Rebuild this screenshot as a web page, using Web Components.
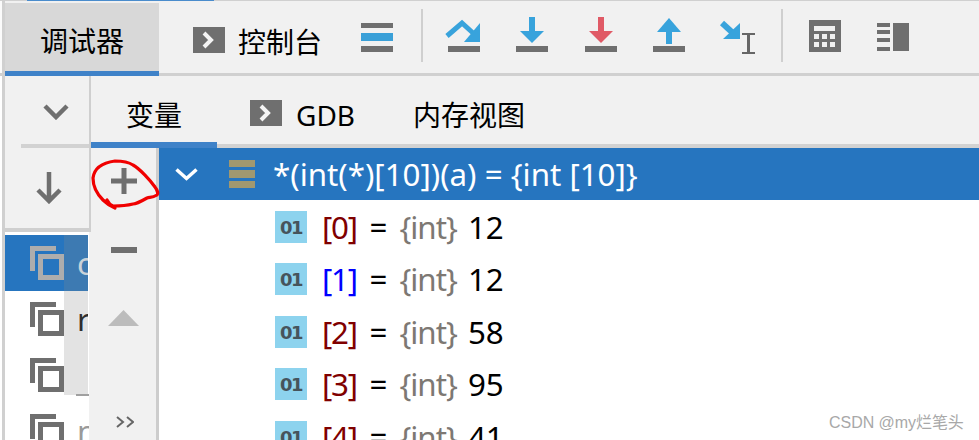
<!DOCTYPE html>
<html lang="zh"><head><meta charset="utf-8"><title>调试器</title>
<style>
html,body{margin:0;padding:0;background:#fff;height:440px;overflow:hidden}
body{font-family:"Noto Sans","Noto Sans CJK SC",sans-serif;font-size:27px;color:#000}
</style></head><body>
<dbg-app>
  <dbg-toolbar slot="toolbar">
    <tool-tab active style="width:154px;margin-right:34px">调试器</tool-tab>
    <tool-tab console style="margin-right:39px">控制台</tool-tab>
    <tool-icon name="menu" style="margin-right:28px"></tool-icon>
    <tool-sep style="margin-right:25px"></tool-sep>
    <tool-icon name="over" style="margin-right:36px"></tool-icon>
    <tool-icon name="into" style="margin-right:37px"></tool-icon>
    <tool-icon name="force" style="margin-right:36px"></tool-icon>
    <tool-icon name="out" style="margin-right:35px"></tool-icon>
    <tool-icon name="cursor" w="36" style="margin-right:25px"></tool-icon>
    <tool-sep style="margin-right:26px"></tool-sep>
    <tool-icon name="calc" style="margin-right:36px"></tool-icon>
    <tool-icon name="layout"></tool-icon>
  </dbg-toolbar>
  <frame-pane slot="frames">
    <frame-row selected>c</frame-row>
    <frame-row>r</frame-row>
    <frame-row></frame-row>
    <frame-row dim>n</frame-row>
  </frame-pane>
  <var-pane slot="vars">
    <sub-tab slot="tabs" active style="width:126px;margin-right:33px">变量</sub-tab>
    <sub-tab slot="tabs" console style="margin-right:58px">GDB</sub-tab>
    <sub-tab slot="tabs">内存视图</sub-tab>
    <root-row slot="rows">*(int(*)[10])(a) = {int [10]}</root-row>
    <var-row slot="rows" style="--idx:#800000"><span slot="idx">[0]</span>12</var-row>
    <var-row slot="rows" style="--idx:#0000ff"><span slot="idx">[1]</span>12</var-row>
    <var-row slot="rows" style="--idx:#800000"><span slot="idx">[2]</span>58</var-row>
    <var-row slot="rows" style="--idx:#800000"><span slot="idx">[3]</span>95</var-row>
    <var-row slot="rows" style="--idx:#800000"><span slot="idx">[4]</span>41</var-row>
  </var-pane>
</dbg-app>
<script>
const ICONS={
 menu:`<rect x="0" y="23" width="32" height="5" fill="#6f6f6f"/><rect x="0" y="33" width="32" height="8" fill="#3aa0d8"/><rect x="0" y="46" width="32" height="6" fill="#6f6f6f"/>`,
 over:`<path d="M-1 36L14 23L25 33" fill="none" stroke="#38a3dc" stroke-width="5"/><path d="M32 23V42H16Z" fill="#38a3dc"/><rect x="0" y="46" width="32" height="6" fill="#6f6f6f"/>`,
 into:`<rect x="13" y="17" width="6" height="15" fill="#38a3dc"/><path d="M4 31H28L16 43Z" fill="#38a3dc"/><rect y="46" width="32" height="6" fill="#6f6f6f"/>`,
 force:`<rect x="13" y="17" width="6" height="15" fill="#e05a66"/><path d="M4 31H28L16 43Z" fill="#e05a66"/><rect y="46" width="32" height="6" fill="#6f6f6f"/>`,
 out:`<path d="M4 32L16 18L28 32Z" fill="#38a3dc"/><rect x="13" y="31" width="6" height="13" fill="#38a3dc"/><rect y="46" width="32" height="6" fill="#6f6f6f"/>`,
 cursor:`<path d="M2 23L14 34" stroke="#38a3dc" stroke-width="6" fill="none"/><path d="M20 23V39H3Z" fill="#38a3dc"/><path d="M22 34h4M31 34h4M22 53h4M31 53h4" stroke="#666" stroke-width="2" fill="none"/><rect x="26" y="33" width="5" height="2" fill="#666"/><rect x="27" y="35" width="3" height="17" fill="#666"/><rect x="26" y="52" width="5" height="2" fill="#666"/>`,
 calc:`<rect y="20" width="32" height="32" fill="#6f6f6f"/><rect x="5" y="26" width="21" height="5" fill="#f0f0f0"/><path d="M5 34h5v5H5zM13 34h5v5h-5zM21 34h5v5h-5zM5 42h5v5H5zM13 42h5v5h-5zM21 42h5v5h-5z" fill="#f0f0f0"/>`,
 layout:`<rect x="16" y="23" width="16" height="28" fill="#6f6f6f"/><path d="M0 23h13v4H0zM0 30h13v4H0zM0 38h13v4H0zM0 47h13v4H0z" fill="#6f6f6f"/>`
};
const CONSOLE=`<svg width="32" height="26" viewBox="0 0 32 26" style="flex:none;margin-top:-4px"><rect width="32" height="26" fill="#6f6f6f"/><path d="M11 6l7 7-7 7" fill="none" stroke="#f4f4f4" stroke-width="4"/></svg>`;
function def(name,html){
  customElements.define(name,class extends HTMLElement{
    connectedCallback(){
      if(this.shadowRoot)return;
      const r=this.attachShadow({mode:'open'});
      r.innerHTML=typeof html==='function'?html(this):html;
    }
  });
}
const UI=`"Noto Sans","Noto Sans CJK SC",sans-serif`;
def('dbg-app',`<style>
:host{display:flex;flex-direction:column;width:979px;height:440px;position:relative;overflow:hidden;background:#fff;box-sizing:border-box;font-family:${UI}}
.split{display:flex;flex:1;min-height:0}
.mark{position:absolute;left:829px;top:409px;font:16px "Liberation Sans","Noto Sans CJK SC",sans-serif;color:#a8a8a8;white-space:nowrap;letter-spacing:-.05px}
svg.ink{position:absolute;left:0;top:0;pointer-events:none}
</style>
<slot name="toolbar"></slot>
<div class="split"><slot name="frames"></slot><slot name="vars"></slot></div>
<svg class="ink" width="979" height="440" viewBox="0 0 979 440"><path d="M115 208C108 205 104 201 103 200C98 195 93 188 93 178C94 170 100 163 115 161C124 161 130 163 133 165C140 169 150 180 155 187C158 191 158 194 157 195C152 198 150 197 147 198C140 202 135 204 133 204C125 206 118 206 113 206C110 205 108 202 107 200" fill="none" stroke="#f00000" stroke-width="3.200" stroke-linecap="round" stroke-linejoin="round"/></svg>
<div class="mark">CSDN @my烂笔头</div>`);
def('dbg-toolbar',`<style>
:host{display:flex;flex:none;height:76px;box-sizing:border-box;padding:3px 0 0 5px;background:linear-gradient(#4a8ccc,#4a8ccc) 27px 0/187px 1px no-repeat,linear-gradient(#d0d0d0,#d0d0d0) 0 0/100% 1px no-repeat,linear-gradient(#d0d0d0,#d0d0d0) 0 100%/100% 3px no-repeat,linear-gradient(#d0d0d0,#d0d0d0) 2px 0/3px 100% no-repeat,linear-gradient(#fbfbfb,#fbfbfb) 0 0/2px 100% no-repeat,#f1f1f1;align-items:flex-start}
</style><slot></slot>`);
def('tool-tab',h=>`<style>
:host{display:flex;align-items:center;justify-content:center;gap:13px;height:73px;box-sizing:border-box;font-size:28px;line-height:1;font-family:${UI};flex:none;padding-top:5px}
:host([active]){background:#d8d8d8;border-bottom:5px solid #3f82c8;height:73px;padding-top:8px}
:host([console]){padding-top:4px}
</style>${h.hasAttribute('console')?CONSOLE:''}<span><slot></slot></span>`);
def('tool-icon',h=>{const w=h.getAttribute('w')||32;return `<style>:host{display:block;flex:none;width:${w}px;height:70px;margin-top:-3px}svg{display:block;overflow:visible}</style><svg width="${w}" height="70" viewBox="0 0 ${w} 70">${ICONS[h.getAttribute('name')]}</svg>`});
def('tool-sep',`<style>:host{display:block;flex:none;width:2px;height:53px;margin-top:6px;background:#cfcfcf}</style>`);
def('frame-pane',`<style>
:host{display:flex;flex-direction:column;flex:none;width:91px;box-sizing:border-box;padding-left:5px;position:relative;background:linear-gradient(#d0d0d0,#d0d0d0) 2px 0/3px 100% no-repeat,#fff;overflow:hidden}
.head{height:72px;flex:none;background:linear-gradient(#d2d2d2,#d2d2d2) 16px 100%/100% 4px no-repeat,#f1f1f1;border-right:2px solid #cfcfcf;box-sizing:border-box;display:flex;align-items:center;justify-content:center;padding:0 0 0 18px}
.down{height:80px;flex:none;background:#f1f1f1;border-bottom:4px solid #cfcfcf;border-right:2px solid #cfcfcf;display:flex;align-items:center;justify-content:center;padding-left:4px}
.list{flex:1;padding-top:3px;position:relative;border-right:2px solid #f1f1f1}
.over{position:absolute;left:59px;top:3px;width:24px;height:160px;background:rgba(140,140,140,.24);border-right:1px solid #fff}
.tail{position:absolute;left:71px;top:162px;width:13px;height:2px;background:#a0a0a0}
svg{display:block}
</style>
<div class="head"><svg width="26" height="16" viewBox="0 0 26 16"><path d="M2 2l11 11L24 2" fill="none" stroke="#6f6f6f" stroke-width="4.500"/></svg></div>
<div class="down"><svg width="26" height="32" viewBox="0 0 26 32"><path d="M13 0V29M2 18l11 11 11-11" fill="none" stroke="#6f6f6f" stroke-width="4.500"/></svg></div>
<div class="list"><slot></slot><div class="over"></div><div class="tail"></div></div>`);
def('frame-row',`<style>
:host{display:flex;align-items:center;height:56px;box-sizing:border-box;padding-left:25px;gap:13px;font-size:31.300px;font-family:${UI};overflow:hidden;color:#111}
:host([selected]){background:#2675bf;color:#dfe9f2;--i:#adadad}
:host([dim]){color:#9a9a9a}
svg{flex:none;display:block}
</style><svg width="34" height="34" viewBox="0 0 34 34"><path d="M2.500 25V2.500H26" fill="none" stroke="var(--i,#6f6f6f)" stroke-width="5"/><rect x="10.500" y="10.500" width="21" height="21" fill="none" stroke="var(--i,#6f6f6f)" stroke-width="5"/></svg><span><slot></slot></span>`);
def('var-pane',`<style>
:host{display:flex;flex-direction:column;flex:1;min-width:0}
.tabs{display:flex;flex:none;height:72px;background:#f1f1f1;box-shadow:inset 0 -4px 0 #d2d2d2}
.body{display:flex;flex:1;min-height:0}
.side{flex:none;width:68px;box-sizing:border-box;background:#f1f1f1;border-right:3px solid #cdcdcd;display:flex;flex-direction:column;align-items:center}
.side svg{display:block;flex:none}
.rows{flex:1;min-width:0;background:#fff;display:flex;flex-direction:column}
</style>
<div class="tabs"><slot name="tabs"></slot></div>
<div class="body">
<div class="side">
<svg style="margin-top:20px" width="26" height="26" viewBox="0 0 26 26"><path d="M0 13H26M13 0V26" stroke="#6f6f6f" stroke-width="5"/></svg>
<svg style="margin-top:53px" width="26" height="6" viewBox="0 0 26 6"><rect width="26" height="6" fill="#6f6f6f"/></svg>
<svg style="margin-top:57px" width="31" height="16" viewBox="0 0 31 16"><path d="M15.500 0L31 16H0Z" fill="#bcbcbc"/></svg>
<svg style="margin:90px 0 0 2px" width="18" height="12" viewBox="0 0 18 12"><path d="M1 1l6 5-6 5M11 1l6 5-6 5" fill="none" stroke="#666" stroke-width="2"/></svg>
</div>
<div class="rows"><slot name="rows"></slot></div>
</div>`);
def('sub-tab',h=>`<style>
:host{display:flex;align-items:center;justify-content:center;gap:14px;height:72px;box-sizing:border-box;font-size:28px;line-height:1;font-family:${UI};flex:none;padding-top:6px}
:host([active]){border-bottom:6px solid #3f82c8;padding-top:12px}
</style>${h.hasAttribute('console')?CONSOLE:''}<span><slot></slot></span>`);
def('root-row',`<style>
:host{display:flex;align-items:center;height:52px;flex:none;background:#2675bf;color:#fff;font-size:31.300px;font-family:${UI};white-space:nowrap;padding-left:16px;box-sizing:border-box}
.st{display:flex;flex-direction:column;gap:3px;margin:0 18px 0 31px}
i{display:block;width:26px;height:7.500px;background:#a09870}
svg{display:block;flex:none}
</style><svg width="23" height="13" viewBox="0 0 23 13"><path d="M1.500 1.500l10 9 10-9" fill="none" stroke="#fff" stroke-width="3.500"/></svg><div class="st"><i></i><i></i><i></i></div><span><slot></slot></span>`);
def('var-row',`<style>
:host{display:flex;align-items:center;height:52.500px;flex:none;box-sizing:border-box;padding:1px 0 0 116px;font-size:31.300px;font-family:${UI};white-space:nowrap}
.b{flex:none;width:32px;height:32px;box-sizing:border-box;padding-top:2px;background:#8dd3ee;display:flex;align-items:center;justify-content:center;font:700 18px/1 "DejaVu Sans",sans-serif;letter-spacing:-1.500px;color:#46545c;margin-right:15px}
.idx{color:var(--idx);letter-spacing:-1.200px}
.eq{margin:0 12px 0 12.600px}
.t{color:#7d7873;margin-right:11px;letter-spacing:-1px}
</style><div class="b">01</div><span class="idx"><slot name="idx"></slot></span><span class="eq">=</span><span class="t">{int}</span><span><slot></slot></span>`);
</script>
</body></html>
